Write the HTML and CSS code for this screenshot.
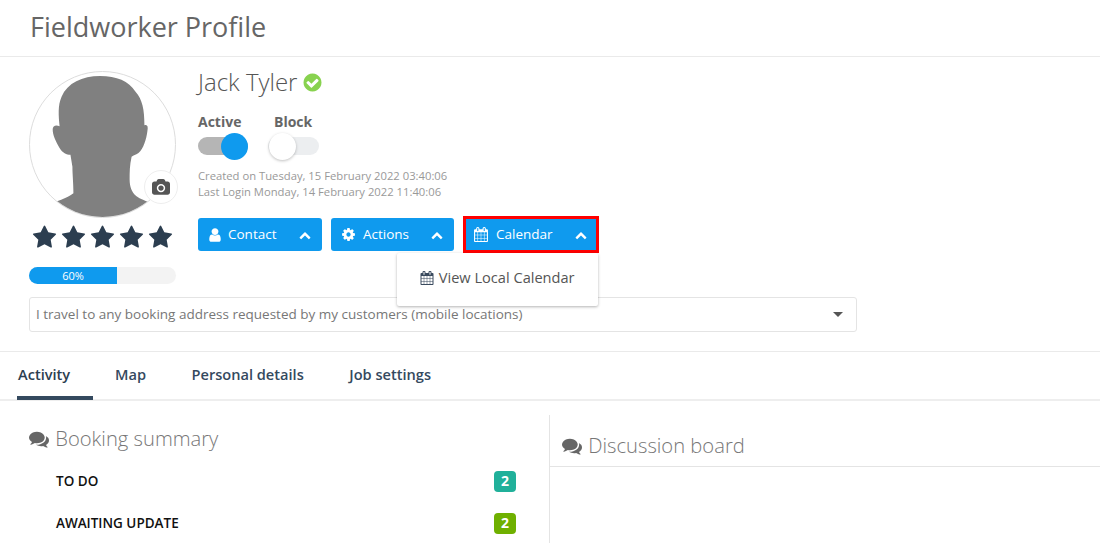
FILE: index.html
```html
<!DOCTYPE html>
<html lang="en">
<head>
  <meta charset="UTF-8" />
  <title>Fieldworker Profile</title>
  <link rel="stylesheet" href="styles.css">
</head>
<body>

  <svg class="sprite" aria-hidden="true">
    <symbol id="i-star" viewBox="0 0 1792 1792"><path d="M1728 647q0 22-26 48l-363 354 86 500q1 7 1 20 0 21-10.5 35.5t-30.5 14.5q-19 0-40-12l-449-236-449 236q-22 12-40 12-21 0-31.5-14.5t-10.5-35.5q0-6 2-20l86-500-364-354q-25-27-25-48 0-37 56-46l502-73 225-455q19-41 49-41t49 41l225 455 502 73q56 9 56 46z"/></symbol>
    <symbol id="i-check" viewBox="0 0 1792 1792"><path d="M1412 734q0-28-18-46l-91-90q-19-19-45-19t-45 19l-408 407-226-226q-19-19-45-19t-45 19l-91 90q-18 18-18 46 0 27 18 45l362 362q19 19 45 19 27 0 46-19l543-543q18-18 18-45zm252 162q0 209-103 385.5t-279.5 279.5-385.5 103-385.5-103-279.5-279.5-103-385.5 103-385.5 279.5-279.5 385.5-103 385.5 103 279.5 279.5 103 385.5z"/></symbol>
    <symbol id="i-user" viewBox="0 0 1792 1792"><path d="M1536 1399q0 109-62.5 187t-150.5 78h-854q-88 0-150.5-78t-62.5-187q0-85 8.5-160.5t31.5-152 58.5-131 94-89 134.5-34.5q131 128 313 128t313-128q76 0 134.5 34.5t94 89 58.5 131 31.5 152 8.5 160.5zm-256-887q0 159-112.5 271.5t-271.5 112.5-271.5-112.5-112.5-271.5 112.5-271.5 271.5-112.5 271.5 112.5 112.5 271.5z"/></symbol>
    <symbol id="i-up" viewBox="0 0 1792 1792"><path d="M1683 1331l-166 165q-19 19-45 19t-45-19l-531-531-531 531q-19 19-45 19t-45-19l-166-165q-19-19-19-45.5t19-45.5l742-741q19-19 45-19t45 19l742 741q19 19 19 45.5t-19 45.5z"/></symbol>
    <symbol id="i-cog" viewBox="0 0 1792 1792"><path d="M1152 896q0-106-75-181t-181-75-181 75-75 181 75 181 181 75 181-75 75-181zm512-109v222q0 12-8 23t-20 13l-185 28q-19 54-39 91 35 50 107 138 10 12 10 25t-9 23q-27 37-99 108t-94 71q-12 0-26-9l-138-108q-44 23-91 38-16 136-29 186-7 28-36 28h-222q-14 0-24.5-8.5t-11.5-21.5l-28-184q-49-16-90-37l-141 107q-10 9-25 9-14 0-25-11-126-114-165-168-7-10-7-23 0-12 8-23 15-21 51-66.5t54-70.5q-27-50-41-99l-183-27q-13-2-21-12.5t-8-23.5v-222q0-12 8-23t19-13l186-28q14-46 39-92-40-57-107-138-10-12-10-24 0-10 9-23 26-36 98.5-107.5t94.5-71.5q13 0 26 10l138 107q44-23 91-38 16-136 29-186 7-28 36-28h222q14 0 24.5 8.5t11.5 21.5l28 184q49 16 90 37l142-107q9-9 24-9 13 0 25 10 129 119 165 170 7 8 7 22 0 12-8 23-15 21-51 66.5t-54 70.5q26 50 41 98l183 28q13 2 21 12.5t8 23.5z"/></symbol>
    <symbol id="i-camera" viewBox="0 0 1920 1792"><path d="M960 672q119 0 203.5 84.5t84.5 203.5-84.5 203.5-203.5 84.5-203.5-84.5-84.5-203.5 84.5-203.5 203.5-84.5zm704-416q106 0 181 75t75 181v896q0 106-75 181t-181 75h-1408q-106 0-181-75t-75-181v-896q0-106 75-181t181-75h224l51-136q19-49 69.5-84.5t103.5-35.5h512q53 0 103.5 35.5t69.5 84.5l51 136h224zm-704 1152q185 0 316.5-131.5t131.5-316.5-131.5-316.5-316.5-131.5-316.5 131.5-131.5 316.5 131.5 316.5 316.5 131.5z"/></symbol>
    <symbol id="i-calendar" viewBox="0 0 1664 1792"><path d="M128 1664h288v-288h-288v288zm352 0h320v-288h-320v288zm-352-352h288v-320h-288v320zm352 0h320v-320h-320v320zm-352-384h288v-288h-288v288zm736 736h320v-288h-320v288zm-384-736h320v-288h-320v288zm768 736h288v-288h-288v288zm-384-352h320v-320h-320v320zm-352-864v-288q0-13-9.500-22.500t-22.500-9.500h-64q-13 0-22.500 9.500t-9.500 22.500v288q0 13 9.500 22.500t22.500 9.500h64q13 0 22.500-9.500t9.500-22.500zm736 864h288v-320h-288v320zm-384-384h320v-288h-320v288zm384 0h288v-288h-288v288zm32-480v-288q0-13-9.500-22.500t-22.500-9.500h-64q-13 0-22.500 9.500t-9.500 22.500v288q0 13 9.500 22.500t22.500 9.500h64q13 0 22.500-9.500t9.500-22.500zm384-64v1280q0 52-38 90t-90 38h-1408q-52 0-90-38t-38-90v-1280q0-52 38-90t90-38h128v-96q0-66 47-113t113-47h64q66 0 113 47t47 113v96h384v-96q0-66 47-113t113-47h64q66 0 113 47t47 113v96h128q52 0 90 38t38 90z"/></symbol>
    <symbol id="i-comments" viewBox="0 0 1792 1792"><path d="M1408 768q0 139-94 257t-256.500 186.500-353.500 68.500q-86 0-176-16-124 88-278 128-36 9-86 16h-3q-11 0-20.500-8t-11.500-21q-1-3-1-6.500t.5-6.500 2-6l2.500-5 3.500-5.500 4-5 4.500-5 4-4.500q5-6 23-25t26-29.500 22.500-29 25-38.500 20.500-44q-124-72-195-177t-71-224q0-139 94-257t256.500-186.500 353.500-68.500 353.500 68.500 256.500 186.500 94 257zm384 256q0 120-71 224.500t-195 176.500q10 24 20.500 44t25 38.500 22.500 29 26 29.500 23 25q1 1 4 4.500t4.500 5 4 5 3.500 5.500l2.500 5 2 6 .5 6.500-1 6.500q-3 14-13 22t-22 7q-50-7-86-16-154-40-278-128-90 16-176 16-271 0-472-132 58 4 88 4 161 0 309-45t264-129q125-92 192-212t67-254q0-77-23-152 129 71 204 178t75 230z"/></symbol>
  </svg>

  <header class="page-head">
    <h1>Fieldworker Profile</h1>
  </header>

  <section class="profile">
    <div class="profile-top">
      <div class="profile-left">
        <div class="avatar">
          <div class="avatar-clip">
            <svg viewBox="0 0 147 147" class="avatar-img">
              <path d="M71 4 C88 4 100 9 107 20 C114 28 116 38 116 54 C119 53 120 55 119 60 C118 68 115 78 110 82 C107 84 105 84 103 86 C101 95 101 102 101 109 C101 116 103 122 108 126 C112 129 116 130 125 134 L125 147 L20 147 L20 134 C25 132 38 128 44 123 C44 112 43 104 43 96 L41 84 C37 84 33 82 30 77 C26 70 23 64 23 58 C23 55 26 53 30 55 C29 44 28 34 32 25 C38 11 53 4 71 4 Z"/>
            </svg>
          </div>
          <span class="avatar-cam"><svg class="icon"><use href="#i-camera"/></svg></span>
        </div>
        <div class="stars">
          <svg class="star"><use href="#i-star"/></svg>
          <svg class="star"><use href="#i-star"/></svg>
          <svg class="star"><use href="#i-star"/></svg>
          <svg class="star"><use href="#i-star"/></svg>
          <svg class="star"><use href="#i-star"/></svg>
        </div>
        <div class="progress"><div class="progress-bar" style="width: 60%">60%</div></div>
      </div>

      <div class="profile-info">
        <h2 class="name">Jack Tyler <svg class="verified"><use href="#i-check"/></svg></h2>

        <div class="toggles">
          <div class="toggle-item">
            <div class="toggle-label">Active</div>
            <div class="toggle on"><span class="knob"></span></div>
          </div>
          <div class="toggle-item">
            <div class="toggle-label block-label">Block</div>
            <div class="toggle"><span class="knob"></span></div>
          </div>
        </div>

        <div class="dates">
          <div>Created on Tuesday, 15 February 2022 03:40:06</div>
          <div>Last Login Monday, 14 February 2022 11:40:06</div>
        </div>

        <div class="actions">
          <button class="btn btn-contact"><svg class="icon"><use href="#i-user"/></svg><span class="btn-text">Contact</span><svg class="chev"><use href="#i-up"/></svg></button>
          <button class="btn btn-actions"><svg class="icon"><use href="#i-cog"/></svg><span class="btn-text">Actions</span><svg class="chev"><use href="#i-up"/></svg></button>
          <div class="dropdown">
            <button class="btn btn-calendar"><svg class="icon"><use href="#i-calendar"/></svg><span class="btn-text">Calendar</span><svg class="chev"><use href="#i-up"/></svg></button>
            <div class="dropdown-menu">
              <svg class="icon menu-icon"><use href="#i-calendar"/></svg> View Local Calendar
            </div>
          </div>
        </div>
      </div>
    </div>

    <div class="select">
      <span class="select-text">I travel to any booking address requested by my customers (mobile locations)</span>
      <span class="caret"></span>
    </div>
  </section>

  <nav class="tabs">
    <a class="tab active">Activity</a>
    <a class="tab">Map</a>
    <a class="tab">Personal details</a>
    <a class="tab">Job settings</a>
  </nav>

  <main class="columns">
    <section class="col-left">
      <h3 class="col-title"><svg class="icon"><use href="#i-comments"/></svg> Booking summary</h3>
      <div class="row"><span>TO DO</span><span class="badge teal">2</span></div>
      <div class="row"><span>AWAITING UPDATE</span><span class="badge green">2</span></div>
    </section>
    <section class="col-right">
      <h3 class="col-title"><svg class="icon"><use href="#i-comments"/></svg> Discussion board</h3>
    </section>
  </main>

</body>
</html>
```

FILE: styles.css
```css
html, body { margin: 0; padding: 0; }
body {
  font-family: 'Open Sans', sans-serif;
  background: #fff; color: #666;
  height: 543px; overflow: hidden;
}
.sprite { display: none; }
.icon { width: 14px; height: 14px; fill: currentColor; }

.page-head { height: 56px; border-bottom: 1px solid #eaeaea; padding-left: 30px; }
h1 { margin: 0; font-size: 27px; line-height: 53px; font-weight: 400; color: #666; }

.profile { padding: 14px 0 19px 29px; border-bottom: 1px solid #eaeaea; box-sizing: border-box; height: 295px; }
.profile-top { display: flex; height: 226px; }
.profile-left { width: 147px; margin-right: 22px; flex: none; }

.avatar { position: relative; width: 147px; height: 147px; }
.avatar-clip {
  width: 147px; height: 147px; border-radius: 50%; overflow: hidden;
  border: 1px solid #ddd; box-sizing: border-box;
}
.avatar-img { display: block; width: 145px; height: 145px; fill: #808080; }
.avatar-cam {
  position: absolute; right: -2px; bottom: 14px; width: 34px; height: 34px;
  background: #fff; border: 1px solid #eee; border-radius: 50%; box-sizing: border-box;
  display: flex; align-items: center; justify-content: center; color: #555;
}
.avatar-cam .icon { width: 18px; height: 17px; }

.stars { display: flex; justify-content: space-between; margin: 7px 3px 0 3px; height: 26px; }
.star { width: 25px; height: 25px; fill: #2c3e50; }

.progress { height: 17px; margin-top: 16px; background: #f3f3f3; border-radius: 9px; overflow: hidden; }
.progress-bar { height: 100%; background: #0f9aee; color: #fff; font-size: 11px; line-height: 17px; text-align: center; }

.name { margin: 0; font-size: 24px; font-weight: 300; line-height: 22px; color: #555; display: flex; align-items: center; gap: 5px; }
.verified { width: 21px; height: 21px; fill: #88d24f; }

.toggles { display: flex; gap: 19px; margin-top: 20px; }
.toggle-label { font-size: 14px; font-weight: 700; line-height: 18px; color: #666; }
.block-label { padding-left: 6px; }
.toggle { position: relative; width: 51px; height: 18px; margin-top: 6px; background: #eceef0; border-radius: 9px; }
.toggle-item:first-child { width: 51px; }
.toggle-item:first-child .toggle { width: 50px; }
.toggle.on { background: #b5b5b5; }
.knob {
  position: absolute; top: -4px; left: 1px; width: 27px; height: 27px; border-radius: 50%;
  background: #fff; box-shadow: 0 1px 3px rgba(0,0,0,0.25);
}
.toggle.on .knob { left: auto; right: 0; background: #0f9aee; box-shadow: none; }

.dates { margin-top: 13px; font-size: 11.25px; line-height: 16px; color: #999; }

.actions { display: flex; gap: 9px; margin-top: 18px; }
.btn {
  display: flex; align-items: center; height: 33px; padding: 0 11px; box-sizing: border-box;
  background: #0f9aee; color: #fff; border: none; border-radius: 3px;
  font-family: inherit; font-size: 13.5px; cursor: pointer;
}
.btn .icon { flex: none; fill: #fff; }
.btn-text { margin-bottom: 2px; }
.btn-contact { width: 124px; padding-left: 9px; }
.btn-contact .icon { width: 16px; height: 16px; }
.btn-contact .btn-text { margin-left: 5px; }
.btn-actions { width: 123px; padding-left: 10px; }
.btn-actions .icon { width: 15px; height: 15px; }
.btn-actions .btn-text { margin-left: 7px; }
.btn-calendar { width: 136px; height: 37px; margin-top: -2px; border: 3px solid #f00; border-radius: 0; padding: 0 9px 0 8px; }
.btn-calendar .icon { width: 14px; height: 15px; }
.btn-calendar .btn-text { margin-left: 8px; }
.chev { width: 12px; height: 12px; fill: #fff; margin-left: auto; }

.dropdown { position: relative; }
.dropdown-menu {
  position: absolute; top: 35px; right: 1px; width: 201px; height: 53px; box-sizing: border-box;
  background: #fff; border-radius: 2px; box-shadow: 0 1px 3px rgba(0,0,0,0.3);
  font-size: 14.6px; color: #555; line-height: 48px; padding-left: 23px; white-space: nowrap;
}
.menu-icon { fill: #3a4a5e; vertical-align: -2px; margin-right: 1px; }

.select {
  display: flex; justify-content: space-between; align-items: center;
  width: 828px; height: 35px; box-sizing: border-box;
  border: 1px solid #e4e4e4; border-radius: 3px; padding: 0 13px 0 6px;
  font-size: 13.5px; color: #777;
}
.select-text { margin-bottom: 2px; }
.caret { width: 0; height: 0; border: 5px solid transparent; border-top: 5px solid #555; border-bottom: 0; margin-top: -1px; }

.tabs { display: flex; height: 47px; border-bottom: 2px solid #eee; padding-left: 17px; }
.tab { font-size: 14.6px; font-weight: 600; line-height: 45px; color: #34495e; margin-right: 45.5px; }
.tab.active { color: #2c3e50; width: 76px; margin-right: 22px; padding-left: 1px; box-sizing: border-box; height: 48px; border-bottom: 4px solid #34495e; }

.columns { display: flex; padding-top: 14px; }
.col-left { width: 520px; padding-left: 29px; flex: none; }
.col-right { flex: 1; border-left: 1px solid #e4e4e4; min-height: 130px; }
.col-title { margin: 0; font-size: 20.2px; font-weight: 300; line-height: 28px; color: #777; padding-top: 9px; }
.col-title .icon { width: 20px; height: 20px; fill: #666; vertical-align: -3px; margin-right: 1px; }
.col-right .col-title { padding: 16px 0 7px 12px; border-bottom: 1px solid #e4e4e4; }

.row {
  display: flex; justify-content: space-between; align-items: center;
  width: 491px; box-sizing: border-box; height: 42px; padding: 0 4px 0 27px;
  font-size: 13.5px; font-weight: 600; color: #111;
}
.col-left .col-title { margin-bottom: 8px; }
.badge { width: 22px; height: 21px; border-radius: 4px; color: #fff; font-size: 14px; font-weight: 700; text-align: center; line-height: 20px; }
.teal { background: #20b09a; }
.green { background: #6fb000; }
```
